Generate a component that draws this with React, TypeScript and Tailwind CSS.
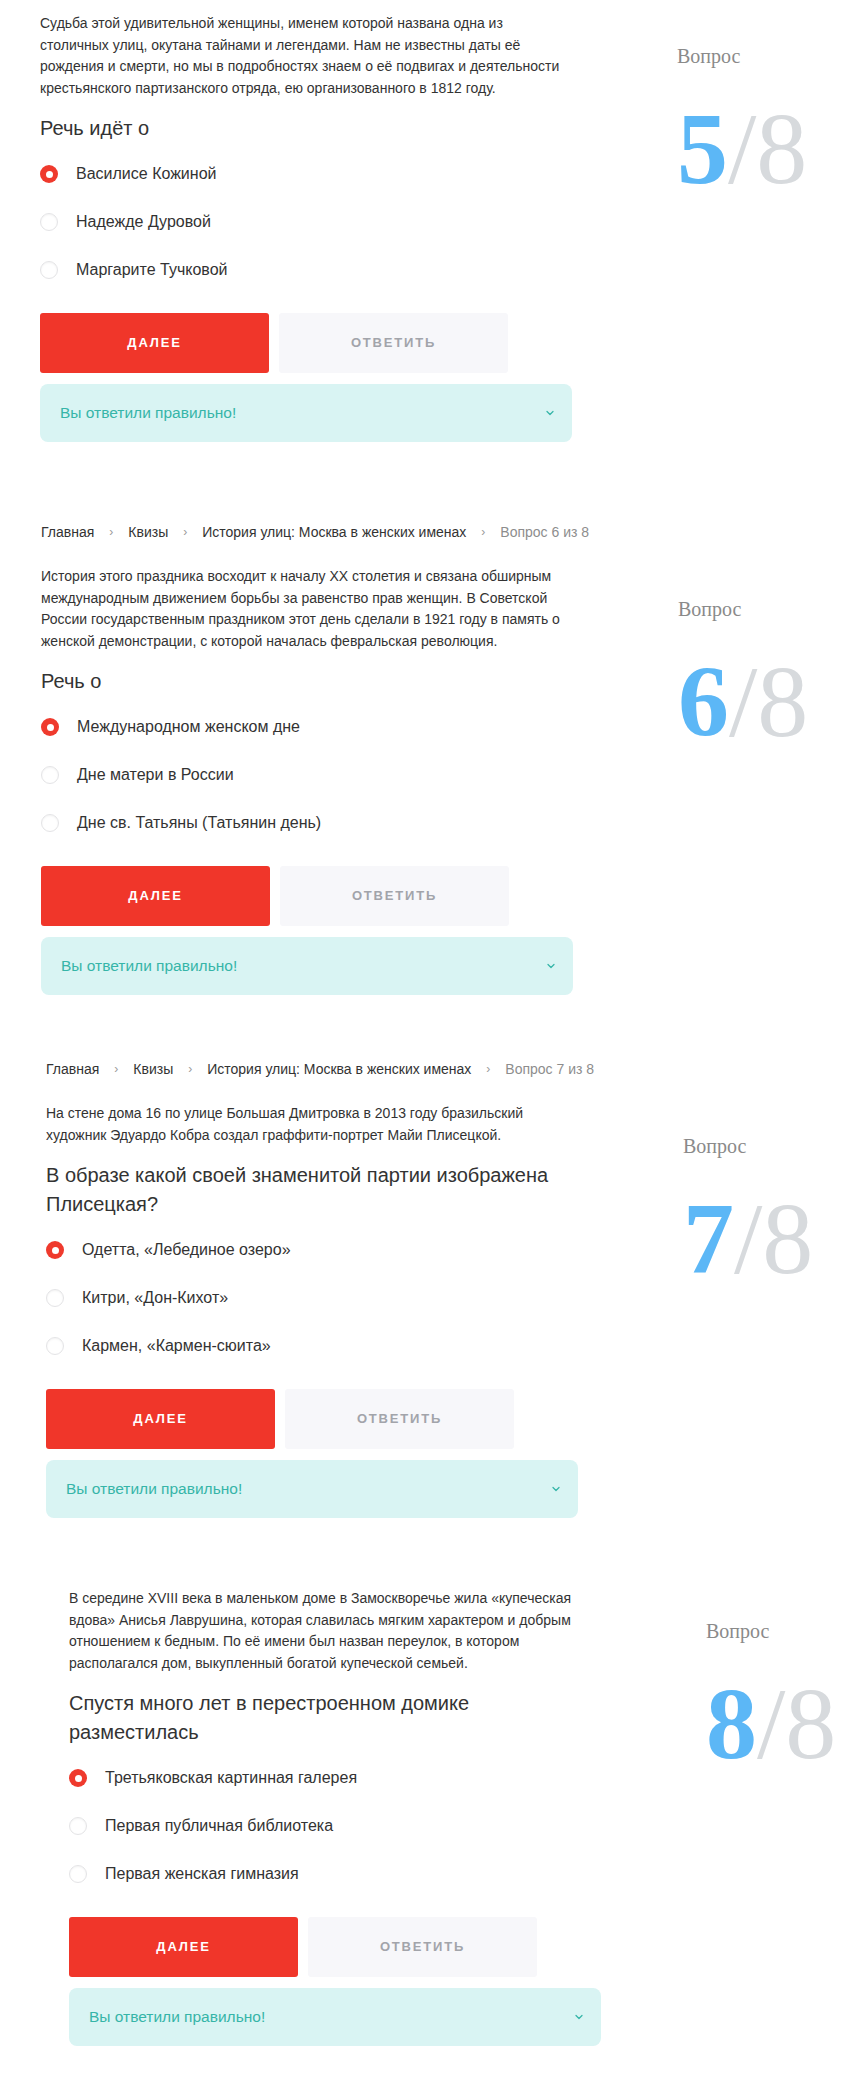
import { ChevronDown } from 'lucide-react';

type Section = {
  ml: string;
  mt: string;
  crumb?: string;
  num: string;
  text: string[];
  question: string[];
  options: string[];
};

const sections: Section[] = [
  {
    ml: 'ml-[40px]',
    mt: 'mt-[13px]',
    num: '5',
    text: [
      'Судьба этой удивительной женщины, именем которой названа одна из',
      'столичных улиц, окутана тайнами и легендами. Нам не известны даты её',
      'рождения и смерти, но мы в подробностях знаем о её подвигах и деятельности',
      'крестьянского партизанского отряда, ею организованного в 1812 году.',
    ],
    question: ['Речь идёт о'],
    options: ['Василисе Кожиной', 'Надежде Дуровой', 'Маргарите Тучковой'],
  },
  {
    ml: 'ml-[41px]',
    mt: 'mt-[80px]',
    crumb: 'Вопрос 6 из 8',
    num: '6',
    text: [
      'История этого праздника восходит к началу XX столетия и связана обширным',
      'международным движением борьбы за равенство прав женщин. В Советской',
      'России государственным праздником этот день сделали в 1921 году в память о',
      'женской демонстрации, с которой началась февральская революция.',
    ],
    question: ['Речь о'],
    options: ['Международном женском дне', 'Дне матери в России', 'Дне св. Татьяны (Татьянин день)'],
  },
  {
    ml: 'ml-[46px]',
    mt: 'mt-[64px]',
    crumb: 'Вопрос 7 из 8',
    num: '7',
    text: [
      'На стене дома 16 по улице Большая Дмитровка в 2013 году бразильский',
      'художник Эдуардо Кобра создал граффити-портрет Майи Плисецкой.',
    ],
    question: ['В образе какой своей знаменитой партии изображена', 'Плисецкая?'],
    options: ['Одетта, «Лебединое озеро»', 'Китри, «Дон-Кихот»', 'Кармен, «Кармен-сюита»'],
  },
  {
    ml: 'ml-[69px]',
    mt: 'mt-[70px]',
    num: '8',
    text: [
      'В середине XVIII века в маленьком доме в Замоскворечье жила «купеческая',
      'вдова» Анисья Лаврушина, которая славилась мягким характером и добрым',
      'отношением к бедным. По её имени был назван переулок, в котором',
      'располагался дом, выкупленный богатой купеческой семьей.',
    ],
    question: ['Спустя много лет в перестроенном домике', 'разместилась'],
    options: ['Третьяковская картинная галерея', 'Первая публичная библиотека', 'Первая женская гимназия'],
  },
];

function Lines({ lines }: { lines: string[] }) {
  return (
    <>
      {lines.map((l, i) => (
        <span key={i} className="block whitespace-nowrap">
          {l}
        </span>
      ))}
    </>
  );
}

function Radio({ checked }: { checked: boolean }) {
  if (checked) {
    return (
      <span className="w-[18px] h-[18px] rounded-full bg-[#ef3a2d] flex items-center justify-center shrink-0">
        <span className="w-[7px] h-[7px] rounded-full bg-white" />
      </span>
    );
  }
  return (
    <span className="w-[18px] h-[18px] rounded-full border border-[#e4e4e6] shadow-[inset_0_1px_2px_rgba(0,0,0,0.05)] shrink-0" />
  );
}

function QuizSection({ s }: { s: Section }) {
  return (
    <section className={`${s.ml} ${s.mt}`}>
      {s.crumb && (
        <nav className="flex items-center gap-[15px] h-[20px] mb-[24px] text-[14px] leading-[20px] text-[#333] whitespace-nowrap">
          <span>Главная</span>
          <span className="text-[#9a9a9a] text-[12px]">›</span>
          <span>Квизы</span>
          <span className="text-[#9a9a9a] text-[12px]">›</span>
          <span>История улиц: Москва в женских именах</span>
          <span className="text-[#9a9a9a] text-[12px]">›</span>
          <span className="text-[#8d8d8d]">{s.crumb}</span>
        </nav>
      )}

      <div className="flex">
        {/* Question column */}
        <div className="w-[532px] shrink-0">
          <p className="text-[14px] leading-[21.5px] text-[#333]">
            <Lines lines={s.text} />
          </p>

          <h2 className="mt-[15px] text-[20px] leading-[29px] text-[#333]">
            <Lines lines={s.question} />
          </h2>

          <div className="mt-[7px]">
            {s.options.map((o, i) => (
              <label key={o} className="h-[48px] flex items-center gap-[18px] text-[16px] text-[#333]">
                <Radio checked={i === 0} />
                <span>{o}</span>
              </label>
            ))}
          </div>

          <div className="mt-[19px] flex gap-[10px]">
            <button className="w-[229px] h-[60px] rounded-[3px] bg-[#f0362a] text-white text-[13px] font-bold tracking-[1.8px]">
              ДАЛЕЕ
            </button>
            <button className="w-[229px] h-[60px] rounded-[3px] bg-[#f7f7fa] text-[#a2a4aa] text-[13px] font-bold tracking-[1.8px]">
              ОТВЕТИТЬ
            </button>
          </div>

          <div className="mt-[11px] h-[58px] rounded-[8px] bg-[#d9f4f3] flex items-center justify-between pl-[20px] pr-[16px]">
            <span className="text-[15.5px] text-[#36b5a8]">Вы ответили правильно!</span>
            <ChevronDown className="w-[12px] h-[12px] text-[#36b5a8]" strokeWidth={2.5} />
          </div>
        </div>

        {/* Counter column */}
        <div className="ml-[105px] pt-[33px] font-['Liberation_Serif',serif]">
          <div className="text-[20px] leading-[20px] text-[#8a8a8a]">Вопрос</div>
          <div className="mt-[32px] text-[102px] leading-[102px] whitespace-nowrap">
            <span className="font-bold text-[#5cb7f6]">{s.num}</span>
            <span className="text-[#d7dadd]">/8</span>
          </div>
        </div>
      </div>
    </section>
  );
}

export default function App() {
  return (
    <div className="w-[864px] min-h-[2089px] bg-white pb-[40px] font-['Liberation_Sans',Arial,sans-serif]">
      {sections.map((s) => (
        <QuizSection key={s.num} s={s} />
      ))}
    </div>
  );
}
